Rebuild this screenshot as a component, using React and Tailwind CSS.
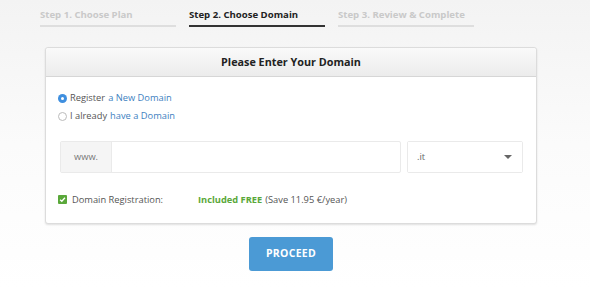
import { useState } from 'react';

const STEPS = [
  { label: 'Step 1. Choose Plan', active: false },
  { label: 'Step 2. Choose Domain', active: true },
  { label: 'Step 3. Review & Complete', active: false },
];

export default function App() {
  const [mode, setMode] = useState('register');
  const [tld, setTld] = useState('.it');
  const [domain, setDomain] = useState('');

  return (
    <div
      className="w-[590px] h-[288px] overflow-hidden bg-gradient-to-b from-[#f3f3f3] via-[#fbfbfb] to-white text-[#444]"
      style={{ fontFamily: '"Open Sans", "Liberation Sans", sans-serif' }}
    >
      {/* Steps */}
      <div className="flex gap-[13px] pl-[40px] pt-[6px]">
        {STEPS.map((s) => (
          <div
            key={s.label}
            className={`w-[136px] h-[21px] whitespace-nowrap text-[9.6px] font-bold leading-[18px] border-b-2 ${
              s.active ? 'text-[#222] border-[#333]' : 'text-[#c9c9c9] border-[#dedede]'
            }`}
          >
            {s.label}
          </div>
        ))}
      </div>

      {/* Card */}
      <div className="ml-[45px] mt-[20px] w-[492px] h-[177px] bg-white border border-[#dcdcdc] rounded-[3px] shadow-[0_1px_2px_rgba(0,0,0,0.12)]">
        <div className="h-[29px] flex items-center justify-center bg-gradient-to-b from-[#fafafa] to-[#ececec] border-b border-[#d6d6d6] rounded-t-[3px] text-[10.8px] font-bold text-[#222]">
          Please Enter Your Domain
        </div>

        <div className="pl-[12px] pr-[13px] pt-[12px]">
          <label className="flex items-center gap-[3px] h-[18px] text-[9.3px] text-[#555] cursor-pointer">
            <input
              type="radio"
              checked={mode === 'register'}
              onChange={() => setMode('register')}
              className="sr-only"
            />
            <span
              className={`w-[9px] h-[9px] rounded-full flex items-center justify-center ${
                mode === 'register' ? 'bg-[#3f8fdf]' : 'border border-[#bbb] bg-white'
              }`}
            >
              {mode === 'register' && <span className="w-[3px] h-[3px] rounded-full bg-white" />}
            </span>
            Register <span className="text-[#3e7fbf]">a New Domain</span>
          </label>
          <label className="flex items-center gap-[3px] h-[18px] text-[9.3px] text-[#555] cursor-pointer">
            <input
              type="radio"
              checked={mode === 'transfer'}
              onChange={() => setMode('transfer')}
              className="sr-only"
            />
            <span
              className={`w-[9px] h-[9px] rounded-full flex items-center justify-center ${
                mode === 'transfer' ? 'bg-[#3f8fdf]' : 'border border-[#bbb] bg-white'
              }`}
            >
              {mode === 'transfer' && <span className="w-[3px] h-[3px] rounded-full bg-white" />}
            </span>
            I already <span className="text-[#3e7fbf]">have a Domain</span>
          </label>

          {/* Domain input */}
          <div className="flex mt-[16px] ml-[2px] gap-[6px]">
            <div className="flex flex-1 h-[32px] border border-[#eaeaea] rounded-[2px]">
              <span className="w-[51px] flex items-center justify-center bg-[#f5f5f5] border-r border-[#eaeaea] text-[9.3px] text-[#777]">
                www.
              </span>
              <input
                value={domain}
                onChange={(e) => setDomain(e.target.value)}
                className="flex-1 min-w-0 px-2 text-[10px] outline-none"
              />
            </div>
            <div className="relative w-[116px] h-[32px] border border-[#eaeaea] rounded-[2px]">
              <select
                value={tld}
                onChange={(e) => setTld(e.target.value)}
                className="w-full h-full appearance-none bg-white pl-[9px] text-[9.3px] text-[#666] outline-none"
              >
                <option>.it</option>
                <option>.com</option>
                <option>.eu</option>
              </select>
              <span className="pointer-events-none absolute right-[10px] top-[13px] w-0 h-0 border-l-[4px] border-r-[4px] border-t-[4px] border-l-transparent border-r-transparent border-t-[#666]" />
            </div>
          </div>

          {/* Registration */}
          <div className="flex items-center mt-[20px] text-[9.3px] text-[#555]">
            <span className="w-[9px] h-[9px] rounded-[1px] bg-[#5aa83a] flex items-center justify-center">
              <svg width="7" height="7" viewBox="0 0 8 8">
                <path d="M1.3 4.2 L3.2 6 L6.8 2" stroke="white" strokeWidth="1.5" fill="none" />
              </svg>
            </span>
            <span className="ml-[5px] w-[126px]">Domain Registration:</span>
            <span className="font-bold text-[#5aa83a]">Included FREE</span>
            <span className="ml-[3px]">(Save 11.95 €/year)</span>
          </div>
        </div>
      </div>

      {/* Proceed */}
      <div className="flex justify-center mt-[13px] pr-[8px]">
        <button className="w-[84px] h-[34px] rounded-[3px] bg-[#4b9ad5] text-white text-[10.5px] font-bold tracking-[0.3px]">
          PROCEED
        </button>
      </div>
    </div>
  );
}
